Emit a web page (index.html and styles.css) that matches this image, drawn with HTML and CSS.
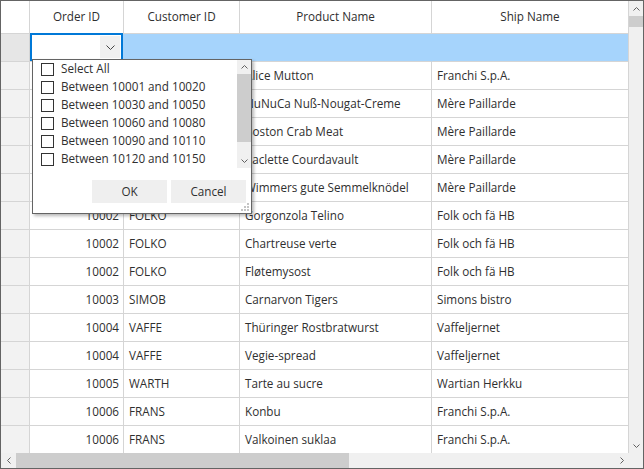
FILE: index.html
```html
<!DOCTYPE html>
<html>
<head>
<meta charset="utf-8">
<link rel="stylesheet" href="styles.css">
</head>
<body>
<div class="grid-frame">
  <div class="viewport">
    <div class="sheet">
      <div class="hcell"></div>
      <div class="hcell">Order ID</div>
      <div class="hcell">Customer ID</div>
      <div class="hcell">Product Name</div>
      <div class="hcell">Ship Name</div>

      <div class="rowhead filter-head"></div>
      <div class="fcell editor-cell">
        <div class="editor">
          <span class="editor-input"></span>
          <span class="drop-btn"><svg width="9" height="5" viewBox="0 0 9 5"><polyline points="0.5,0.5 4.5,4.5 8.5,0.5" fill="none" stroke="#444" stroke-width="1"/></svg></span>
        </div>
      </div>
      <div class="fcell"></div>
      <div class="fcell"></div>
      <div class="fcell fcell-last"></div>

      <div class="rowhead"></div><div class="cell num">10001</div><div class="cell">FRANS</div><div class="cell">Alice Mutton</div><div class="cell">Franchi S.p.A.</div>
      <div class="rowhead"></div><div class="cell num">10001</div><div class="cell">MEREP</div><div class="cell">NuNuCa Nuß-Nougat-Creme</div><div class="cell">Mère Paillarde</div>
      <div class="rowhead"></div><div class="cell num">10001</div><div class="cell">MEREP</div><div class="cell">Boston Crab Meat</div><div class="cell">Mère Paillarde</div>
      <div class="rowhead"></div><div class="cell num">10001</div><div class="cell">MEREP</div><div class="cell">Raclette Courdavault</div><div class="cell">Mère Paillarde</div>
      <div class="rowhead"></div><div class="cell num">10001</div><div class="cell">MEREP</div><div class="cell">Wimmers gute Semmelknödel</div><div class="cell">Mère Paillarde</div>
      <div class="rowhead"></div><div class="cell num">10002</div><div class="cell">FOLKO</div><div class="cell">Gorgonzola Telino</div><div class="cell">Folk och fä HB</div>
      <div class="rowhead"></div><div class="cell num">10002</div><div class="cell">FOLKO</div><div class="cell">Chartreuse verte</div><div class="cell">Folk och fä HB</div>
      <div class="rowhead"></div><div class="cell num">10002</div><div class="cell">FOLKO</div><div class="cell">Fløtemysost</div><div class="cell">Folk och fä HB</div>
      <div class="rowhead"></div><div class="cell num">10003</div><div class="cell">SIMOB</div><div class="cell">Carnarvon Tigers</div><div class="cell">Simons bistro</div>
      <div class="rowhead"></div><div class="cell num">10004</div><div class="cell">VAFFE</div><div class="cell">Thüringer Rostbratwurst</div><div class="cell">Vaffeljernet</div>
      <div class="rowhead"></div><div class="cell num">10004</div><div class="cell">VAFFE</div><div class="cell">Vegie-spread</div><div class="cell">Vaffeljernet</div>
      <div class="rowhead"></div><div class="cell num">10005</div><div class="cell">WARTH</div><div class="cell">Tarte au sucre</div><div class="cell">Wartian Herkku</div>
      <div class="rowhead"></div><div class="cell num">10006</div><div class="cell">FRANS</div><div class="cell">Konbu</div><div class="cell">Franchi S.p.A.</div>
      <div class="rowhead"></div><div class="cell num">10006</div><div class="cell">FRANS</div><div class="cell">Valkoinen suklaa</div><div class="cell">Franchi S.p.A.</div>
    </div>

    <div class="popup">
      <div class="popup-body">
        <div class="check-list">
          <div class="check-item"><span class="box"></span><span>Select All</span></div>
          <div class="check-item"><span class="box"></span><span>Between 10001 and 10020</span></div>
          <div class="check-item"><span class="box"></span><span>Between 10030 and 10050</span></div>
          <div class="check-item"><span class="box"></span><span>Between 10060 and 10080</span></div>
          <div class="check-item"><span class="box"></span><span>Between 10090 and 10110</span></div>
          <div class="check-item"><span class="box"></span><span>Between 10120 and 10150</span></div>
        </div>
        <div class="mini-vscroll">
          <span class="sb-btn small"><svg width="7" height="4" viewBox="0 0 7 4"><polyline points="0.5,3.5 3.5,0.5 6.5,3.5" fill="none" stroke="#606060" stroke-width="1"/></svg></span>
          <span class="mini-thumb"></span>
          <span class="sb-track"></span>
          <span class="sb-btn small"><svg width="7" height="4" viewBox="0 0 7 4"><polyline points="0.5,0.5 3.5,3.5 6.5,0.5" fill="none" stroke="#606060" stroke-width="1"/></svg></span>
        </div>
      </div>
      <div class="popup-footer">
        <button class="btn">OK</button>
        <button class="btn">Cancel</button>
      </div>
      <svg class="grip" width="8" height="8" viewBox="0 0 8 8">
        <rect x="6" y="0" width="2" height="2" fill="#c4c4c4"/>
        <rect x="3" y="3" width="2" height="2" fill="#c4c4c4"/>
        <rect x="6" y="3" width="2" height="2" fill="#c4c4c4"/>
        <rect x="0" y="6" width="2" height="2" fill="#c4c4c4"/>
        <rect x="3" y="6" width="2" height="2" fill="#c4c4c4"/>
        <rect x="6" y="6" width="2" height="2" fill="#c4c4c4"/>
      </svg>
    </div>
  </div>

  <div class="vscroll">
    <span class="sb-btn"><svg width="7" height="4" viewBox="0 0 7 4"><polyline points="0.5,3.5 3.5,0.5 6.5,3.5" fill="none" stroke="#606060" stroke-width="1"/></svg></span>
    <span class="v-thumb"></span>
    <span class="sb-track"></span>
    <span class="sb-btn"><svg width="7" height="4" viewBox="0 0 7 4"><polyline points="0.5,0.5 3.5,3.5 6.5,0.5" fill="none" stroke="#606060" stroke-width="1"/></svg></span>
  </div>

  <div class="hscroll">
    <span class="sb-btn h"><svg width="4" height="7" viewBox="0 0 4 7"><polyline points="3.5,0.5 0.5,3.5 3.5,6.5" fill="none" stroke="#606060" stroke-width="1"/></svg></span>
    <span class="h-thumb"></span>
    <span class="sb-track"></span>
    <span class="sb-btn h"><svg width="4" height="7" viewBox="0 0 4 7"><polyline points="0.5,0.5 3.5,3.5 0.5,6.5" fill="none" stroke="#606060" stroke-width="1"/></svg></span>
  </div>

  <div class="sb-corner"></div>
</div>
</body>
</html>
```

FILE: styles.css
```css
html, body {
  margin: 0;
  padding: 0;
  background: #ffffff;
}

body {
  font-family: "Open Sans", "Noto Sans", sans-serif;
  font-size: 11.7px;
  color: #2f2f2f;
}

.grid-frame {
  width: 644px;
  height: 469px;
  box-sizing: border-box;
  border: 1px solid #646464;
  display: grid;
  grid-template-columns: 628px 14px;
  grid-template-rows: 452px 15px;
  overflow: hidden;
}

.viewport {
  position: relative;
  overflow: hidden;
}

.sheet {
  display: grid;
  grid-template-columns: 29px 94px 116px 192px 197px;
  grid-template-rows: 33px 28px;
  grid-auto-rows: 28px;
}

.sheet > div {
  box-sizing: border-box;
  border-right: 1px solid #d5d5d5;
  border-bottom: 1px solid #d5d5d5;
  display: flex;
  align-items: center;
  white-space: nowrap;
  overflow: hidden;
}

.hcell {
  justify-content: center;
  background: #ffffff;
  padding-bottom: 2px;
}

.rowhead {
  background: #f2f2f2;
}

.filter-head {
  background: #e6e6e6;
}

.fcell {
  background: #a6d4fc;
  border-right-color: #a6d4fc !important;
}

.fcell-last {
  border-right-color: #d5d5d5 !important;
}

.editor-cell {
  align-items: stretch !important;
  overflow: visible !important;
}

.editor {
  flex: 1;
  display: flex;
  box-sizing: border-box;
  border: 2px solid #0078d7;
  background: #ffffff;
  margin-top: -1px;
}

.editor-input {
  flex: 1;
}

.drop-btn {
  width: 20px;
  margin: 1px 1px 1px 0;
  background: #f0f0f0;
  display: flex;
  align-items: center;
  justify-content: center;
}

.cell {
  padding: 0 4px 2px 5px;
}

.cell.num {
  justify-content: flex-end;
}

/* popup filter */
.popup {
  position: absolute;
  left: 31px;
  top: 58px;
  width: 220px;
  height: 155px;
  box-sizing: border-box;
  border: 1px solid #646464;
  background: #ffffff;
  box-shadow: 2px 2px 3px rgba(0, 0, 0, 0.28);
  display: flex;
  flex-direction: column;
}

.popup-body {
  display: flex;
  height: 108px;
}

.check-list {
  flex: 1;
  padding-left: 8px;
  overflow: hidden;
}

.check-item {
  height: 18px;
  display: flex;
  align-items: center;
  gap: 7px;
  white-space: nowrap;
}

.check-item span:last-child {
  margin-top: -2px;
}

.box {
  width: 13px;
  height: 13px;
  box-sizing: border-box;
  border: 1px solid #333333;
  background: #ffffff;
  flex: none;
}

.mini-vscroll {
  width: 14px;
  display: flex;
  flex-direction: column;
  background: #f0f0f0;
}

.sb-btn {
  flex: none;
  height: 15px;
  display: flex;
  align-items: center;
  justify-content: center;
  background: #f0f0f0;
}

.sb-btn.small {
  height: 14px;
}

.mini-thumb {
  height: 68px;
  background: #cdcdcd;
}

.sb-track {
  flex: 1;
  background: #f0f0f0;
}

.popup-footer {
  display: flex;
  justify-content: flex-end;
  gap: 4px;
  padding: 12px 5px 0 0;
}

.btn {
  width: 75px;
  height: 23px;
  border: none;
  background: #efefef;
  color: #2f2f2f;
  font-family: "Open Sans", "Noto Sans", sans-serif;
  font-size: 11.7px;
  padding: 0 0 2px 0;
}

.grip {
  position: absolute;
  right: 2px;
  bottom: 2px;
}

/* main scrollbars */
.vscroll {
  display: flex;
  flex-direction: column;
  background: #f0f0f0;
}

.v-thumb {
  height: 11px;
  background: #cdcdcd;
}

.hscroll {
  display: flex;
  background: #f0f0f0;
}

.sb-btn.h {
  width: 15px;
  height: auto;
}

.h-thumb {
  width: 333px;
  background: #cdcdcd;
}

.sb-corner {
  background: #f0f0f0;
}
```
